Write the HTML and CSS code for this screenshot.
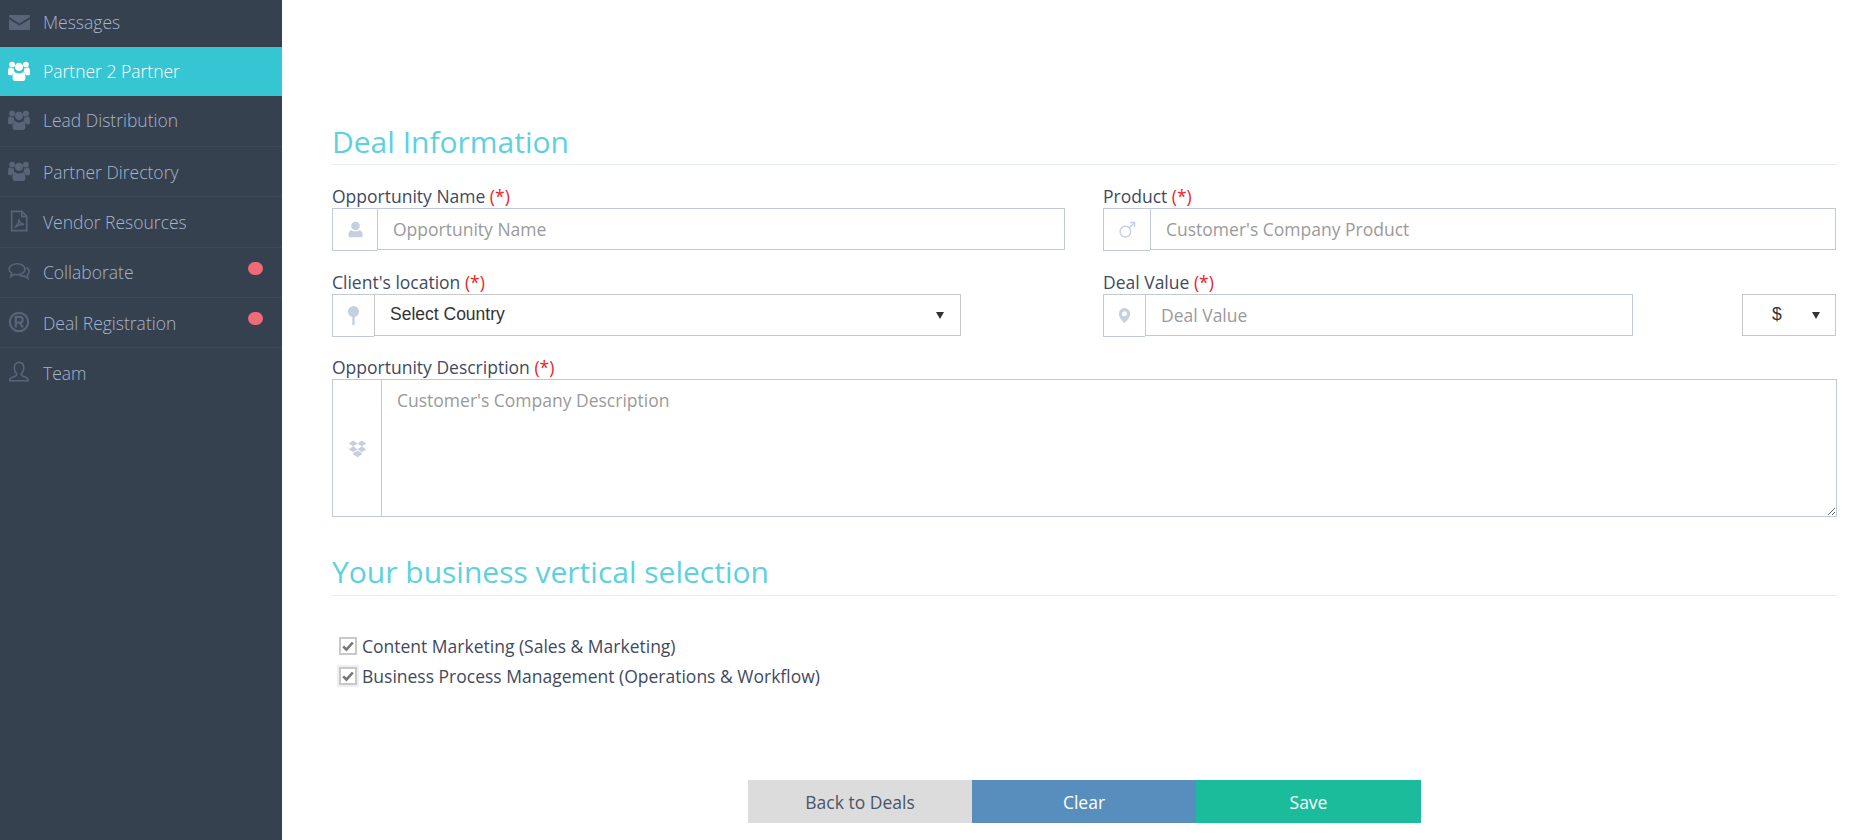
FILE: index.html
```html
<!DOCTYPE html>
<html lang="en">
<head>
<meta charset="utf-8">
<title>Deal Registration</title>
<link rel="stylesheet" href="styles.css">
</head>
<body>
<div class="app">
  <nav class="sidebar">
    <a class="nav-item nav-first">
      <svg class="nav-icon nav-mail" viewBox="0 0 24 24"><path d="M1 3.500h22c.6 0 1 .4 1 1v1.200L12 13 0 5.700V4.500c0-.6.4-1 1-1zM0 8.200l12 7.300 12-7.300V19c0 1-.8 1.700-1.700 1.700H1.700C.8 20.700 0 20 0 19z"/></svg>
      <span>Messages</span>
    </a>
    <a class="nav-item nav-active">
      <svg class="nav-icon" viewBox="0 0 24 24"><use href="#users"/></svg>
      <span>Partner 2 Partner</span>
    </a>
    <a class="nav-item nav-lead">
      <svg class="nav-icon" viewBox="0 0 24 24"><use href="#users"/></svg>
      <span>Lead Distribution</span>
    </a>
    <a class="nav-item">
      <svg class="nav-icon" viewBox="0 0 24 24"><use href="#users"/></svg>
      <span>Partner Directory</span>
    </a>
    <a class="nav-item">
      <svg class="nav-icon nav-line" viewBox="0 0 24 24"><path d="M4 1.500h11l5.500 5.500v15.500H4zM15 1.500V7h5.500M7 19c2.500-1 5-5.500 5-9 0 3 2 5 5.500 5.500-3.500 0-7 1-10.500 3.500z"/></svg>
      <span>Vendor Resources</span>
    </a>
    <a class="nav-item">
      <svg class="nav-icon nav-line" viewBox="0 0 24 24"><path d="M10 4c5 0 8.500 2.700 8.500 6s-3.500 6-8.500 6c-1 0-2 0-3-.4L3 18l1-3.700C2.300 13.200 1.200 11.700 1.200 10 1.200 6.700 5 4 10 4zM20 8.500c2 1 3 2.600 3 4.300 0 1.500-.8 2.800-2 3.700l.8 3.500-4-2.500c-1.500.2-3.800.2-5.300-.8"/></svg>
      <span>Collaborate</span>
      <i class="nav-badge"></i>
    </a>
    <a class="nav-item">
      <svg class="nav-icon nav-reg" viewBox="0 0 24 24"><circle cx="12" cy="12" r="10"/><path d="M8.500 18V6.500h4.200c2 0 3.300 1.200 3.300 3.100s-1.300 3.100-3.300 3.100H8.500M12.800 12.700l3.400 5.300"/></svg>
      <span>Deal Registration</span>
      <i class="nav-badge"></i>
    </a>
    <a class="nav-item nav-last">
      <svg class="nav-icon nav-line" viewBox="0 0 24 24"><path d="M12 1.500c3.200 0 5.200 2.500 5.200 6 0 2.700-1.200 5-2.700 6.200-.5 1.500.3 2.200 2 3 2.500 1 5.500 1.800 5.500 3.300v1.500H2V20c0-1.500 3-2.300 5.500-3.300 1.700-.8 2.500-1.500 2-3C8 12.500 6.800 10.200 6.800 7.500c0-3.500 2-6 5.200-6z"/></svg>
      <span>Team</span>
    </a>
  </nav>

  <main class="content">
    <form class="deal-form">
      <h2 class="section-title">Deal Information</h2>
      <div class="form-grid">
        <div class="field">
          <label class="field-label">Opportunity Name <em>(*)</em></label>
          <div class="group">
            <span class="addon addon-45">
              <svg class="addon-icon" viewBox="0 0 24 24"><path d="M12 1a6 6 0 0 1 6 6 6 6 0 0 1-6 6 6 6 0 0 1-6-6 6 6 0 0 1 6-6zM6.500 13c1.400 1.100 3.300 1.700 5.500 1.700s4.100-.6 5.500-1.700c3 .3 4.500 3 4.500 6.500v1c0 1.700-1 2.500-2.500 2.500h-15C3 23 2 22.200 2 20.500v-1C2 16 3.500 13.300 6.500 13z"/></svg>
            </span>
            <input class="control" type="text" placeholder="Opportunity Name">
          </div>
        </div>
        <div class="field">
          <label class="field-label">Product <em>(*)</em></label>
          <div class="group">
            <span class="addon addon-47">
              <svg class="addon-icon addon-line" viewBox="0 0 24 24"><circle cx="9" cy="15" r="7.500"/><path d="M14.500 9.500L22 2M15.500 2H22v6.500"/></svg>
            </span>
            <input class="control" type="text" placeholder="Customer's Company Product">
          </div>
        </div>
        <div class="field">
          <label class="field-label">Client's location <em>(*)</em></label>
          <div class="group">
            <span class="addon addon-42">
              <svg class="addon-icon addon-pin" viewBox="0 0 24 24"><circle cx="12" cy="7" r="7"/><rect x="10.500" y="13" width="3" height="11"/></svg>
            </span>
            <span class="select-wrap select-country">
              <select class="control-select"><option>Select Country</option></select>
            </span>
          </div>
        </div>
        <div class="field">
          <label class="field-label">Deal Value <em>(*)</em></label>
          <div class="value-row">
            <div class="group group-value">
              <span class="addon addon-42">
                <svg class="addon-icon addon-marker" viewBox="0 0 24 24"><path fill-rule="evenodd" d="M12 0a9 9 0 0 1 9 9c0 5-5 11-9 15-4-4-9-10-9-15a9 9 0 0 1 9-9zm0 5a4 4 0 1 0 0 8 4 4 0 0 0 0-8z"/></svg>
              </span>
              <input class="control" type="text" placeholder="Deal Value">
            </div>
            <span class="select-wrap select-currency">
              <select class="control-select control-currency"><option>$</option></select>
            </span>
          </div>
        </div>
      </div>

      <div class="field field-desc">
        <label class="field-label">Opportunity Description <em>(*)</em></label>
        <div class="group group-area">
          <span class="addon addon-49">
            <svg class="addon-icon addon-drop" viewBox="0 0 24 24"><path d="M6.500 2L12 5.600 6.500 9.300 1 5.600zM17.500 2L23 5.600l-5.500 3.700L12 5.600zM1 13l5.500-3.700L12 13l-5.500 3.600zM23 13l-5.500-3.700L12 13l5.500 3.600zM6.500 18l5.500-3.500 5.500 3.500v1.500L12 23l-5.500-3.500z"/></svg>
          </span>
          <textarea class="control control-area" placeholder="Customer's Company Description"></textarea>
        </div>
      </div>

      <h2 class="section-title section-title-2">Your business vertical selection</h2>
      <div class="checks">
        <label class="check">
          <span class="box"><svg viewBox="0 0 16 16"><path d="M2.500 8.500l3.700 3.700L13.500 4"/></svg></span>
          Content Marketing (Sales &amp; Marketing)
        </label>
        <label class="check">
          <span class="box box-focus"><svg viewBox="0 0 16 16"><path d="M2.500 8.500l3.700 3.700L13.500 4"/></svg></span>
          Business Process Management (Operations &amp; Workflow)
        </label>
      </div>

      <div class="actions">
        <button type="button" class="btn btn-back">Back to Deals</button>
        <button type="button" class="btn btn-clear">Clear</button>
        <button type="button" class="btn btn-save">Save</button>
      </div>
    </form>
  </main>
</div>

<svg class="sprites" width="0" height="0" aria-hidden="true">
  <symbol id="users" viewBox="0 0 24 24">
    <circle cx="4.500" cy="5" r="3.200"/><circle cx="19.500" cy="5" r="3.200"/><circle cx="12" cy="7.500" r="4.500"/>
    <path d="M0 13c0-3 .8-5 2.500-4.700.8.600 1.500.9 2.500.9.600 0 1-.1 1.500-.3-.4 2 .2 3.500 1.300 4.700C5.500 14 5 15 4.500 16.500H1.500C.5 16.500 0 16 0 15zM24 13c0-3-.8-5-2.500-4.700-.8.600-1.500.9-2.500.9-.6 0-1-.1-1.500-.3.4 2-.2 3.500-1.300 4.700 2.300.4 2.800 1.400 3.300 2.900h3c1 0 1.500-.5 1.500-1.500zM7.500 13c1 1 2.800 1.700 4.500 1.700s3.500-.7 4.500-1.700c2 0 2.500 3.500 2.500 7 0 2-1 3-2.500 3h-9C6 23 5 22 5 20c0-3.500.5-7 2.500-7z"/>
  </symbol>
</svg>
</body>
</html>
```
FILE: styles.css
```css
* { box-sizing: border-box; }
html, body { margin: 0; height: 100%; overflow: hidden; background: #fff; }
body { font-family: "Open Sans", sans-serif; font-size: 17.500px; color: #3f4a5f; }

.sprites { position: absolute; }

.app { display: flex; height: 840px; }

.sidebar { width: 282px; flex: none; background: #364150; display: flex; flex-direction: column; }
.nav-item { position: relative; display: flex; align-items: center; height: 50.300px; padding-left: 43px; font-weight: 300; font-size: 17.500px; color: #a5b5cb; border-bottom: 1px solid #3d4957; }
.nav-first { height: 47px; border-bottom: 0; padding-bottom: 4px; }
.nav-active { height: 49px; border-bottom: 0; background: #36c6d3; color: #fff; padding-bottom: 2px; }
.nav-lead { height: 51px; padding-bottom: 2px; }
.nav-last { border-bottom: 0; }
.nav-icon { position: absolute; left: 8px; top: 50%; width: 22px; height: 22px; margin-top: -12px; fill: #586578; }
.nav-mail { left: 9px; width: 21px; height: 21px; }
.nav-active .nav-icon { fill: #fff; }
.nav-line { fill: none; stroke: #586578; stroke-width: 1.700; }
.nav-reg { fill: none; stroke: #586578; stroke-width: 2.400; }
.nav-badge { position: absolute; right: 19px; top: 14px; width: 15px; height: 13px; border-radius: 7px; background: #ef6b78; }

.content { flex: 1; padding: 124px 35px 0 50px; min-width: 0; }

.section-title { margin: 0; height: 41px; font-size: 30px; font-weight: 400; line-height: 36px; color: #5dd1de; border-bottom: 1px solid #e7ecf1; }
.section-title-2 { margin-top: 36px; height: 43px; line-height: 37px; }

.form-grid { display: grid; grid-template-columns: 733px 733px; column-gap: 38px; row-gap: 20px; margin-top: 19px; }
.field-label { display: block; height: 24px; line-height: 24px; color: #3f4a5f; }
.field-label em { font-style: normal; color: #f01c24; }

.group { display: flex; height: 42px; }
.group-area { height: 138px; }
.value-row { display: flex; justify-content: space-between; }
.group-value { width: 530px; }

.addon { flex: none; display: flex; align-items: center; justify-content: center; border: 1px solid #c2cad8; border-right: 0; height: 43px; background: #fff; }
.group-area .addon { height: 138px; }
.addon-42 { width: 42px; }
.addon-45 { width: 45px; }
.addon-47 { width: 47px; }
.addon-49 { width: 49px; }
.addon-icon { width: 17px; height: 17px; fill: #c5cfdf; }
.addon-line { fill: none; stroke: #c5cfdf; stroke-width: 2; }
.addon-pin { width: 19px; height: 19px; }
.addon-marker { width: 15px; height: 15px; }
.addon-drop { width: 19px; height: 19px; }

.control { flex: 1; min-width: 0; height: 42px; border: 1px solid #c2cad8; border-radius: 0; padding: 0 15px; font-family: "Open Sans", sans-serif; font-size: 17.500px; color: #3f4a5f; background: #fff; outline: 0; }
.control::placeholder { color: #9a9a9a; opacity: 1; }
.control-area { height: 138px; padding: 8px 15px; resize: both; display: block; }

.select-wrap { position: relative; flex: none; display: block; height: 42px; }
.select-wrap::after { content: ""; position: absolute; top: 18px; border-left: 4.500px solid transparent; border-right: 4.500px solid transparent; border-top: 7px solid #333; pointer-events: none; }
.select-country { width: 587px; }
.select-country::after { right: 17px; }
.select-currency { width: 94px; }
.select-currency::after { right: 16px; }
.control-select { appearance: none; display: block; width: 100%; height: 42px; border: 1px solid #c8c8c8; border-radius: 0; background: #fff; padding: 0 15px 2px; font-family: "Liberation Sans", sans-serif; font-size: 17.500px; color: #333; outline: 0; }
.control-currency { padding-left: 29px; }

.field-desc { margin-top: 19px; }

.checks { margin-top: 38px; display: flex; flex-direction: column; gap: 7px; }
.check { display: flex; align-items: center; height: 23px; padding-left: 7px; gap: 5px; color: #3f4a5f; }
.box { flex: none; display: flex; align-items: center; justify-content: center; width: 18px; height: 18px; border: 2px solid #c8c8c8; background: #fff; }
.box svg { width: 14px; height: 14px; fill: none; stroke: #777; stroke-width: 3; }
.box-focus { box-shadow: 0 0 0 2px #eee; }

.actions { display: flex; justify-content: center; margin-top: 93px; }
.btn { width: 224px; height: 43px; border: 0; border-radius: 0; font-family: "Open Sans", sans-serif; font-size: 17.500px; color: #fff; }
.btn-back { background: #dcdcdc; color: #4a5568; }
.btn-clear { background: #578ebe; }
.btn-save { background: #1bbc9b; width: 225px; }
```
